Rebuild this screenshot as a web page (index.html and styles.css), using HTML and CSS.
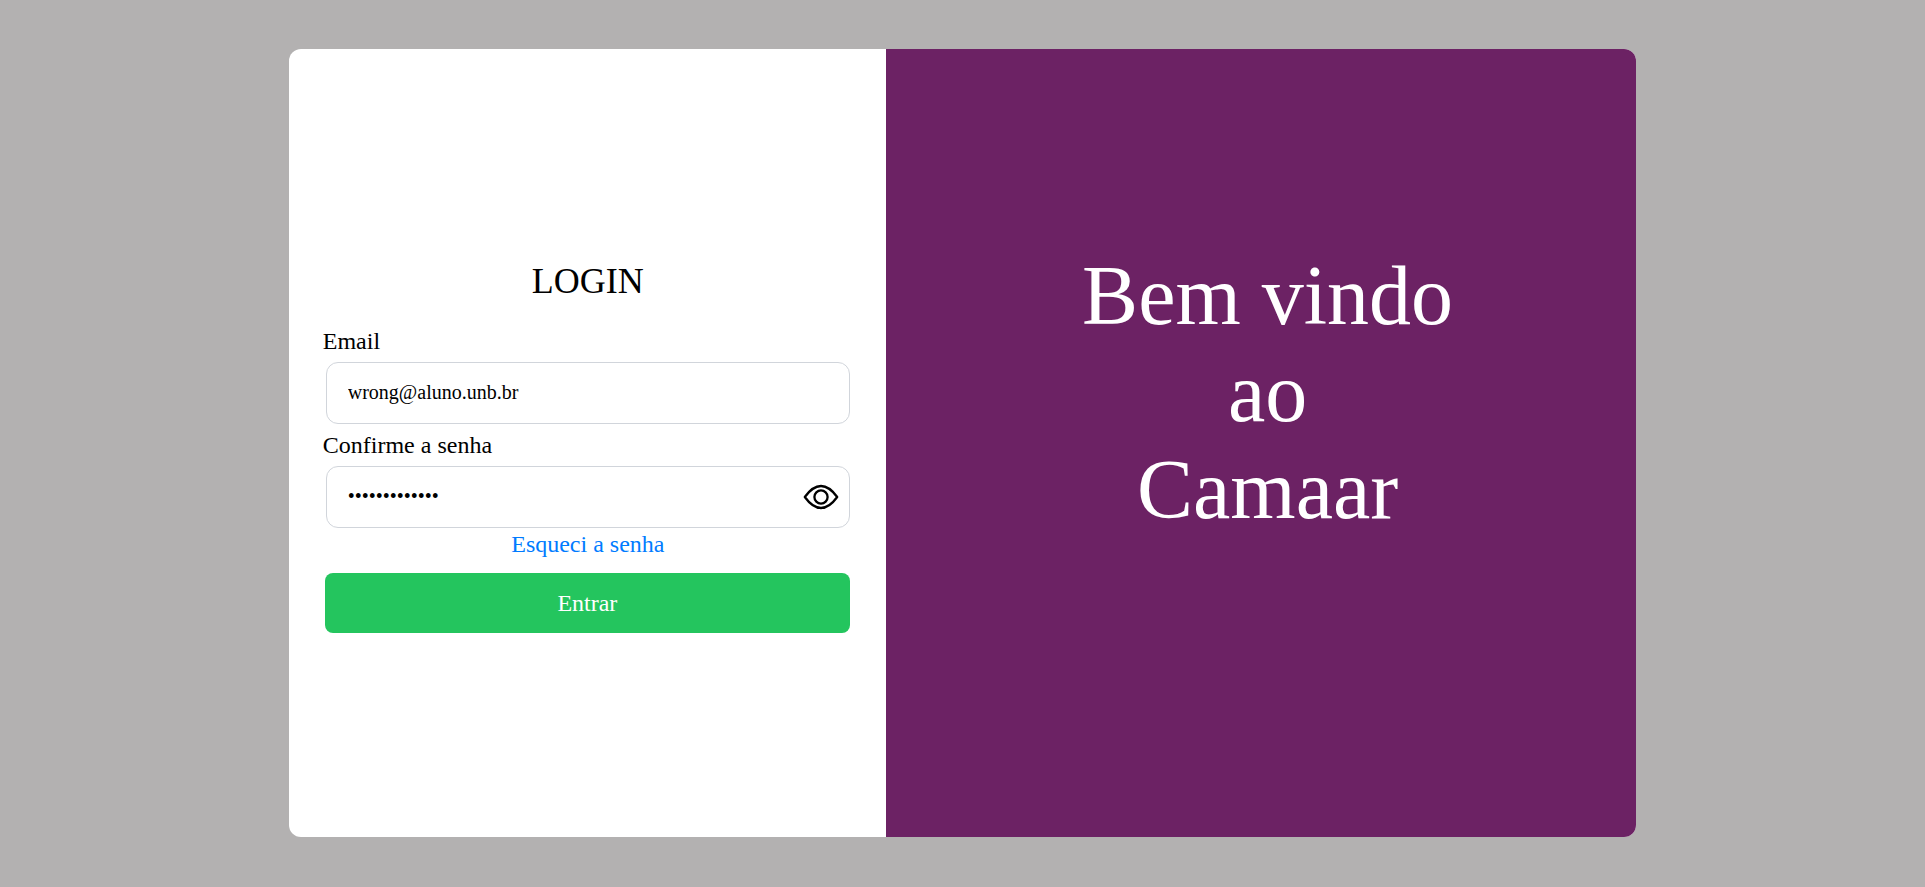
FILE: index.html
```html
<!DOCTYPE html>
<html lang="pt-BR">
<head>
<meta charset="utf-8">
<meta name="viewport" content="width=device-width, initial-scale=1">
<title>Login - Camaar</title>
<link rel="stylesheet" href="styles.css">
</head>
<body class="page">
<main class="card">
  <section class="panel">
    <form class="form">
      <h1 class="title">LOGIN</h1>
      <div class="field">
        <label class="label" for="email">Email</label>
        <input class="input" id="email" type="email" value="wrong@aluno.unb.br">
      </div>
      <div class="field">
        <label class="label" for="password">Confirme a senha</label>
        <div class="password">
          <input class="input" id="password" type="password" value="wrongpassword">
          <button class="toggle" type="button" aria-label="Mostrar senha">
            <svg class="eye" viewBox="0 0 36 26" fill="none" stroke="#000" stroke-width="2.3" stroke-linejoin="round">
              <path d="M1.8 13C6.5 6.500 11 2 18 2S29.500 6.500 34.200 13C29.500 19.500 25 24 18 24S6.500 19.500 1.800 13Z"/>
              <circle cx="18" cy="13" r="6.600"/>
            </svg>
          </button>
        </div>
      </div>
      <a class="forgot" href="#">Esqueci a senha</a>
      <button class="submit" type="submit">Entrar</button>
    </form>
  </section>
  <section class="welcome">
    <p class="greeting">Bem vindo<br>ao<br>Camaar</p>
  </section>
</main>
</body>
</html>
```
FILE: styles.css
```css
* {
  box-sizing: border-box;
}

.page {
  display: flex;
  min-height: 100vh;
  margin: 0;
  padding: 49px 15% 50px;
  background: #b3b1b1;
  color: #000;
  font-family: "Liberation Serif", "Times New Roman", serif;
  font-size: 24px;
  line-height: 28px;
}

.card {
  display: grid;
  flex: 1;
  grid-template-columns: 597fr 750fr;
  overflow: hidden;
  border-radius: 12px;
  background: #fff;
}

.panel {
  display: flex;
  flex-direction: column;
  justify-content: center;
  padding: 6px 33px 0 34px;
}

.form {
  display: flex;
  flex-direction: column;
}

.title {
  margin: 0 0 25px;
  font-size: 36px;
  font-weight: 400;
  line-height: 42px;
  text-align: center;
}

.field {
  display: flex;
  flex-direction: column;
  gap: 7px;
  margin-bottom: 7px;
}

.password {
  display: flex;
  flex-direction: column;
  position: relative;
}

.input {
  height: 62px;
  margin: 0 3px;
  padding: 0 21px;
  border: 1px solid #d1d5db;
  border-radius: 12px;
  background: #fff;
  color: #000;
  font: inherit;
  font-size: 20px;
}

.toggle {
  display: flex;
  position: absolute;
  top: 0;
  right: 14px;
  height: 100%;
  align-items: center;
  padding: 0;
  border: 0;
  background: none;
  cursor: pointer;
}

.eye {
  width: 36px;
  height: 26px;
}

.forgot {
  align-self: center;
  margin: -5px 0 15px;
  color: #007bff;
  text-decoration: none;
}

.submit {
  height: 60px;
  margin: 0 3px 0 2px;
  border: 0;
  border-radius: 8px;
  background: #24c55e;
  color: #fff;
  font: inherit;
  cursor: pointer;
}

.welcome {
  padding: 198px 0 0 13px;
  background: #6c2264;
  color: #fff;
}

.greeting {
  margin: 0;
  font-size: 84px;
  line-height: 97px;
  text-align: center;
}
```
